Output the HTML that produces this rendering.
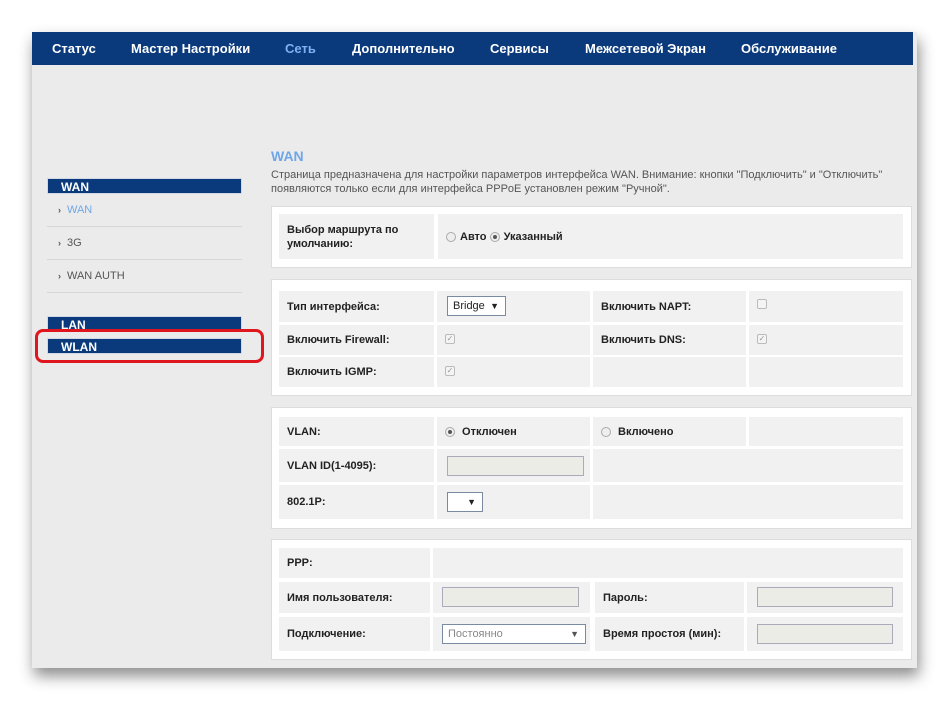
<!DOCTYPE html>
<html><head><meta charset="utf-8"><style>
*{box-sizing:border-box;margin:0;padding:0}
body{width:950px;height:701px;background:#fff;position:relative;overflow:hidden;font-family:"Liberation Sans",Arial,sans-serif}
.frame{position:absolute;left:32px;top:32px;width:885px;height:636px;background:#ebebeb;box-shadow:2px 8px 14px rgba(0,0,0,.45)}
.nav{position:absolute;left:32px;top:32px;width:881px;height:33px;background:#0a3a7c}
.nav span{position:absolute;top:9px;color:#fff;font-weight:bold;font-size:13px}
.a{position:absolute}
.hdr{position:absolute;left:47px;width:195px;height:16px;background:#0a3a7c;color:#fff;font-weight:bold;font-size:12px;padding-left:13px;line-height:16px;border:1px solid #d0d8e6}
.sub{position:absolute;left:58px;font-size:11px;color:#555}
.sub b{font-size:9px;color:#555;margin-right:6px}
.line{position:absolute;left:47px;width:195px;height:1px;background:#d6d6d6}
.box{position:absolute;left:271px;width:641px;background:#fff;border:1px solid #ddd}
.c{position:absolute;background:#f1f1f1;font-size:11px;font-weight:bold;color:#222;padding-left:8px;display:flex;align-items:center}
.inp{position:absolute;background:#ececE6;border:1px solid #aab;height:20px}
.sel{position:absolute;background:#fff;border:1px solid #7a8aa0;font-size:11px;color:#222;padding-left:5px;line-height:18px;height:20px}
.sel i{position:absolute;right:6px;top:0;font-style:normal;font-size:9px}
.rad{display:inline-block;width:10px;height:10px;border-radius:50%;border:1px solid #aaa;background:#eee;vertical-align:-1px;margin-right:4px;position:relative}
.rad.on:after{content:"";position:absolute;left:2px;top:2px;width:4px;height:4px;border-radius:50%;background:#555}
.chk{position:absolute;width:10px;height:10px;border:1px solid #bbb;border-radius:2px;background:#f4f4f4;font-size:8px;color:#999;line-height:8px;text-align:center;font-weight:normal}
</style></head><body>
<div class="frame"></div>
<div class="nav">
<span style="left:20px">Статус</span>
<span style="left:99px">Мастер Настройки</span>
<span style="left:253px;color:#7fb0f0">Сеть</span>
<span style="left:320px">Дополнительно</span>
<span style="left:458px">Сервисы</span>
<span style="left:553px">Межсетевой Экран</span>
<span style="left:709px">Обслуживание</span>
</div>

<div class="hdr" style="top:178px">WAN</div>
<div class="sub" style="top:204px;color:#6fa6e8"><b>›</b>WAN</div>
<div class="line" style="top:226px"></div>
<div class="sub" style="top:237px"><b>›</b>3G</div>
<div class="line" style="top:259px"></div>
<div class="sub" style="top:270px"><b>›</b>WAN AUTH</div>
<div class="line" style="top:292px"></div>
<div class="hdr" style="top:316px">LAN</div>
<div class="hdr" style="top:338px">WLAN</div>
<div class="a" style="left:35px;top:329px;width:229px;height:34px;border:3px solid #e0161e;border-radius:8px"></div>

<div class="a" style="left:271px;top:148px;font-size:14px;font-weight:bold;color:#6fa6e8">WAN</div>
<div class="a" style="left:271px;top:168px;font-size:11px;color:#555;line-height:14px;width:640px">Страница предназначена для настройки параметров интерфейса WAN. Внимание: кнопки "Подключить" и "Отключить" появляются только если для интерфейса PPPoE установлен режим "Ручной".</div>

<div class="box" style="top:206px;height:62px"></div>
<div class="c" style="left:279px;top:214px;width:155px;height:45px;line-height:14px">Выбор маршрута по умолчанию:</div>
<div class="c" style="left:438px;top:214px;width:465px;height:45px"><span class="rad"></span>Авто&nbsp;<span class="rad on"></span>Указанный</div>

<div class="box" style="top:279px;height:117px"></div>
<div class="c" style="left:279px;top:291px;width:155px;height:31px">Тип интерфейса:</div>
<div class="c" style="left:437px;top:291px;width:153px;height:31px"></div>
<div class="sel" style="left:447px;top:296px;width:59px">Bridge<i>▼</i></div>
<div class="c" style="left:593px;top:291px;width:153px;height:31px">Включить NAPT:</div>
<div class="c" style="left:749px;top:291px;width:154px;height:31px"><span class="chk" style="left:8px;top:8px"></span></div>
<div class="c" style="left:279px;top:325px;width:155px;height:30px">Включить Firewall:</div>
<div class="c" style="left:437px;top:325px;width:153px;height:30px"><span class="chk" style="left:8px;top:9px">✓</span></div>
<div class="c" style="left:593px;top:325px;width:153px;height:30px">Включить DNS:</div>
<div class="c" style="left:749px;top:325px;width:154px;height:30px"><span class="chk" style="left:8px;top:9px">✓</span></div>
<div class="c" style="left:279px;top:357px;width:155px;height:30px">Включить IGMP:</div>
<div class="c" style="left:437px;top:357px;width:153px;height:30px"><span class="chk" style="left:8px;top:9px">✓</span></div>
<div class="c" style="left:593px;top:357px;width:153px;height:30px"></div>
<div class="c" style="left:749px;top:357px;width:154px;height:30px"></div>

<div class="box" style="top:407px;height:122px"></div>
<div class="c" style="left:279px;top:417px;width:155px;height:29px">VLAN:</div>
<div class="c" style="left:437px;top:417px;width:153px;height:29px"><span class="rad on"></span>&nbsp;Отключен</div>
<div class="c" style="left:593px;top:417px;width:153px;height:29px"><span class="rad"></span>&nbsp;Включено</div>
<div class="c" style="left:749px;top:417px;width:154px;height:29px"></div>
<div class="c" style="left:279px;top:449px;width:155px;height:33px">VLAN ID(1-4095):</div>
<div class="c" style="left:437px;top:449px;width:153px;height:33px"></div>
<div class="inp" style="left:447px;top:456px;width:137px"></div>
<div class="c" style="left:593px;top:449px;width:310px;height:33px"></div>
<div class="c" style="left:279px;top:485px;width:155px;height:34px">802.1P:</div>
<div class="c" style="left:437px;top:485px;width:153px;height:34px"></div>
<div class="sel" style="left:447px;top:492px;width:36px"><i>▼</i></div>
<div class="c" style="left:593px;top:485px;width:310px;height:34px"></div>

<div class="box" style="top:539px;height:121px"></div>
<div class="c" style="left:279px;top:548px;width:151px;height:30px">PPP:</div>
<div class="c" style="left:433px;top:548px;width:470px;height:30px"></div>
<div class="c" style="left:279px;top:582px;width:151px;height:31px">Имя пользователя:</div>
<div class="c" style="left:433px;top:582px;width:157px;height:31px"></div>
<div class="inp" style="left:442px;top:587px;width:137px"></div>
<div class="c" style="left:595px;top:582px;width:149px;height:31px">Пароль:</div>
<div class="c" style="left:747px;top:582px;width:156px;height:31px"></div>
<div class="inp" style="left:757px;top:587px;width:136px"></div>
<div class="c" style="left:279px;top:617px;width:151px;height:34px">Подключение:</div>
<div class="c" style="left:433px;top:617px;width:157px;height:34px"></div>
<div class="sel" style="left:442px;top:624px;width:144px;color:#888;font-weight:normal">Постоянно<i style="color:#555">▼</i></div>
<div class="c" style="left:595px;top:617px;width:149px;height:34px">Время простоя (мин):</div>
<div class="c" style="left:747px;top:617px;width:156px;height:34px"></div>
<div class="inp" style="left:757px;top:624px;width:136px"></div>
</body></html>
